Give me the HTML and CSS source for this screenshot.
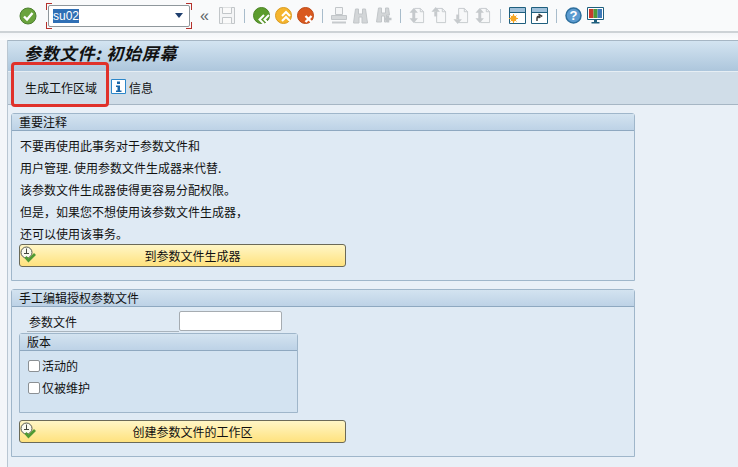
FILE: index.html
```html
<!DOCTYPE html>
<html lang="zh">
<head>
<meta charset="utf-8">
<title>参数文件: 初始屏幕</title>
<link rel="stylesheet" href="styles.css">
</head>
<body>
<svg class="defs" width="0" height="0">
  <symbol id="clock" viewBox="0 0 18 18">
    <circle cx="6.500" cy="7.500" r="5.500" fill="#fafaf0" stroke="#55594f" stroke-width="1"/>
    <path d="M6.500 3.500v5M4 8.500h5" stroke="#45483f" stroke-width="1" fill="none"/>
    <path d="M5.500 12l3 3.500 6.500-6.500" stroke="#4f9a34" stroke-width="2.800" fill="none"/>
  </symbol>
  <symbol id="doc" viewBox="0 0 16 18">
    <path d="M5.500 1.500h6l3.500 3.500v11.500h-9.500z" fill="#f7f8f9" stroke="#c6cacd"/>
    <path d="M11.500 1.500v3.500h3.500" fill="none" stroke="#c6cacd"/>
  </symbol>
</svg>

<header class="toolbar">
  <svg class="ic i-ok" width="18" height="18" viewBox="0 0 18 18">
    <circle cx="9" cy="9" r="8" fill="#6aa33d" stroke="#4d8030"/>
    <path d="M5 9.500l3 3 5.500-6.500" stroke="#fff" stroke-width="2.400" fill="none"/>
  </svg>
  <div class="cmd">
    <i class="crn tl"></i><i class="crn tr"></i><i class="crn bl"></i><i class="crn br"></i>
    <div class="cmd-field"><span class="sel">su02</span><b class="arrow"></b></div>
  </div>
  <span class="chev">«</span>
  <svg class="ic i-save" width="16" height="17" viewBox="0 0 16 17">
    <path d="M.5 .5h15v16h-15z" fill="#f4f5f6" stroke="#c2c6c9"/>
    <path d="M3.500 .5v6h9v-6M3.500 16.500v-6h9v6" fill="#fafafa" stroke="#c2c6c9"/>
  </svg>
  <i class="sep s1"></i>
  <svg class="ic i-nav1" width="18" height="18" viewBox="0 0 18 18">
    <circle cx="8.500" cy="8.500" r="8" fill="#5c9c2e" stroke="#4c8426"/>
    <path d="M11 8l-4.500 4.500 4.500 4.500M16 8l-4.500 4.500 4.500 4.500" stroke="#fff" stroke-width="2" fill="none"/>
  </svg>
  <svg class="ic i-nav2" width="17" height="18" viewBox="0 0 17 18">
    <circle cx="8.500" cy="8.500" r="8" fill="#f5b52e" stroke="#d99a20"/>
    <path d="M7 9l4-4 4 4M7 14l4-4 4 4" stroke="#fff" stroke-width="2" fill="none"/>
  </svg>
  <svg class="ic i-nav3" width="18" height="18" viewBox="0 0 18 18">
    <circle cx="8.500" cy="8.500" r="8" fill="#d9591f" stroke="#bd4a18"/>
    <path d="M8.500 9l6 6M14.500 9l-6 6" stroke="#fff" stroke-width="2.400" fill="none"/>
  </svg>
  <i class="sep s2"></i>
  <svg class="ic i-print" width="16" height="17" viewBox="0 0 16 17">
    <path d="M4.500 .5h7v7h-7z" fill="#f4f5f6" stroke="#c2c6c9"/>
    <path d="M.5 8.500h15v4h-15z" fill="#d6d9db" stroke="#c2c6c9"/>
    <path d="M1 14.500h14v2h-14z" fill="#c6cacd"/>
  </svg>
  <svg class="ic i-bin" width="15" height="16" viewBox="0 0 15 16">
    <path d="M2.500 1h3v5h4v-5h3l2 14h-5.500v-6h-3v6h-5.500z" fill="#d3d6d8" stroke="#c2c6c9"/>
  </svg>
  <svg class="ic i-binp" width="16" height="17" viewBox="0 0 16 17">
    <path d="M2.500 1h3v5h4v-5h3l1 7h-3v7h-2v-6h-3v6h-5z" fill="#d3d6d8" stroke="#c2c6c9"/>
    <path d="M12 8.500v7M8.500 12h7" stroke="#c2c6c9" stroke-width="2.500"/>
  </svg>
  <i class="sep s3"></i>
  <svg class="ic i-d1" width="16" height="17" viewBox="0 0 16 18"><use href="#doc"/><path d="M4.500 1l4.500 5h-9zM4.500 17l4.500-5h-9z" fill="#c6cacd"/><path d="M3 5h3v8h-3z" fill="#c6cacd"/></svg>
  <svg class="ic i-d2" width="16" height="17" viewBox="0 0 16 18"><use href="#doc"/><path d="M4.500 0l4.500 5h-9z" fill="#c6cacd"/><path d="M3 5h3v5h-3z" fill="#c6cacd"/></svg>
  <svg class="ic i-d2" width="16" height="17" viewBox="0 0 16 18"><use href="#doc"/><path d="M4.500 18l4.500-5h-9z" fill="#c6cacd"/><path d="M3 8h3v5h-3z" fill="#c6cacd"/></svg>
  <svg class="ic i-d2" width="16" height="17" viewBox="0 0 16 18"><use href="#doc"/><path d="M4.500 1l4.500 5h-9zM4.500 17l4.500-5h-9z" fill="#c6cacd"/><path d="M3 5h3v8h-3z" fill="#c6cacd"/></svg>
  <i class="sep s4"></i>
  <svg class="ic i-w1" width="17" height="17" viewBox="0 0 17 17">
    <path d="M.5 .5h16v16h-16z" fill="#fff" stroke="#1f5f7e"/>
    <path d="M1 1h15v4h-15z" fill="#9fc0da"/>
    <path d="M1 5.500h15" stroke="#1f5f7e"/>
    <circle cx="4.500" cy="11.500" r="3" fill="#f5a623"/>
    <path d="M4.500 7v9M0 11.500h9M1.500 8.500l6 6M7.500 8.500l-6 6" stroke="#f5a623"/>
  </svg>
  <svg class="ic i-w2" width="17" height="17" viewBox="0 0 17 17">
    <path d="M.5 .5h16v16h-16z" fill="#fff" stroke="#1f5f7e"/>
    <path d="M1 1h15v4h-15z" fill="#9fc0da"/>
    <path d="M1 5.500h15" stroke="#1f5f7e"/>
    <path d="M6 14v-2.500q0-2.500 3-2.500M7.500 7l3 2-3 2" stroke="#3c3c3c" stroke-width="1.500" fill="none"/>
  </svg>
  <i class="sep s5"></i>
  <svg class="ic i-help" width="17" height="17" viewBox="0 0 17 17">
    <circle cx="8.500" cy="8.500" r="7.500" fill="#5b9bd0" stroke="#2e6f9e" stroke-width="1.500"/>
    <text class="q" x="8.500" y="13" text-anchor="middle">?</text>
  </svg>
  <svg class="ic i-mon" width="17" height="17" viewBox="0 0 17 17">
    <path d="M.5 .5h16v12h-16z" fill="#fff" stroke="#1f5f7e"/>
    <path d="M2 2h4.500v9h-4.500z" fill="#c8392b"/>
    <path d="M6.500 2h4v9h-4z" fill="#4d9a3a"/>
    <path d="M10.500 2h4.500v9h-4.500z" fill="#3f79b8"/>
    <path d="M7 13h3v2h-3zM4.500 15h8v1.500h-8z" fill="#1f5f7e"/>
  </svg>
</header>

<div class="strip"></div>

<main class="screen">
  <h1 class="title">参数文件: 初始屏幕</h1>
  <nav class="appbar">
    <span class="app-item first">生成工作区域</span>
    <svg class="info" width="15" height="15" viewBox="0 0 15 15">
      <path d="M.5 .5h14v14h-14z" fill="#fff" stroke="#2b86c9"/>
      <path d="M6 2.500h3v2.500h-3zM5 6.500h4v5h1.500v1.500h-5.500v-1.500h1.500v-3.500h-1.500z" fill="#1a66a8"/>
    </svg>
    <span class="app-item">信息</span>
  </nav>
  <i class="redbox"></i>

  <div class="content">
    <section class="group g1">
      <h2 class="group-head">重要注释</h2>
      <div class="group-body">
        <p class="line">不要再使用此事务对于参数文件和</p>
        <p class="line">用户管理. 使用参数文件生成器来代替.</p>
        <p class="line">该参数文件生成器使得更容易分配权限。</p>
        <p class="line">但是，如果您不想使用该参数文件生成器，</p>
        <p class="line">还可以使用该事务。</p>
        <button class="btn b1" type="button"><svg class="btn-ic" width="18" height="18"><use href="#clock"/></svg><span>到参数文件生成器</span></button>
      </div>
    </section>

    <section class="group g2">
      <h2 class="group-head">手工编辑授权参数文件</h2>
      <div class="group-body">
        <div class="field-row">
          <label class="field-label">参数文件</label>
          <span class="input"></span>
        </div>
        <section class="group inner">
          <h3 class="group-head">版本</h3>
          <div class="inner-body">
            <div class="check"><i class="box"></i><span>活动的</span></div>
            <div class="check"><i class="box"></i><span>仅被维护</span></div>
          </div>
        </section>
        <button class="btn b2" type="button"><svg class="btn-ic" width="18" height="18"><use href="#clock"/></svg><span>创建参数文件的工作区</span></button>
      </div>
    </section>
  </div>
</main>
</body>
</html>
```
FILE: styles.css
```css
* { box-sizing: border-box; }
html, body { margin: 0; padding: 0; }
body {
  width: 738px;
  height: 467px;
  overflow: hidden;
  display: flex;
  flex-direction: column;
  background: #f4f6f9;
  color: #111;
  font: 12px/1 "Noto Sans CJK SC", "Liberation Sans", sans-serif;
}
.defs { position: absolute; }

.toolbar {
  height: 33px;
  flex: none;
  display: flex;
  align-items: center;
  padding: 0 0 0 19px;
  background: #f9fafb;
  border-bottom: 2px solid #cdd2d6;
}
.ic { flex: none; display: block; }
.cmd { position: relative; width: 146px; height: 26px; margin-left: 9px; padding: 2px; flex: none; }
.crn { position: absolute; width: 6px; height: 7px; border: 0 solid #b5312c; }
.tl { left: 0; top: 0; border-width: 1.500px 0 0 1.500px; }
.tr { right: 0; top: 0; border-width: 1.500px 1.500px 0 0; }
.bl { left: 0; bottom: 0; border-width: 0 0 1.500px 1.500px; }
.br { right: 0; bottom: 0; border-width: 0 1.500px 1.500px 0; }
.cmd-field {
  height: 22px;
  display: flex;
  align-items: center;
  justify-content: space-between;
  padding: 0 6px 0 4px;
  background: #fff;
  border: 1px solid #8f979c;
  border-radius: 2px;
}
.sel {
  background: #2f6fb5;
  color: #fff;
  font: 12px/14px "Liberation Sans", sans-serif;
}
.arrow { width: 0; height: 0; border: 4.500px solid transparent; border-top: 5px solid #1f3f6e; border-bottom: 0; }
.chev { margin-left: 8px; width: 11px; font: 16px/16px "Liberation Sans", sans-serif; color: #5d6468; }
.i-save { margin-left: 8px; }
.sep { flex: none; width: 1px; height: 14px; background: #a8bccb; }
.s1 { margin: 0 8px 0 9px; }
.i-nav2 { margin-left: 4px; }
.i-nav3 { margin-left: 5px; }
.s2 { margin: 0 8px 0 7px; }
.i-bin { margin-left: 6px; }
.i-binp { margin-left: 8px; }
.s3 { margin: 0 8px; }
.i-d2 { margin-left: 6px; }
.s4 { margin: 0 8px 0 9px; }
.i-w2 { margin-left: 5px; }
.s5 { margin: 0 8px; }
.i-mon { margin-left: 5px; }
.q { font: bold 13px "Liberation Sans", sans-serif; fill: #fff; }

.strip { height: 7px; flex: none; background: linear-gradient(#f3f5f8, #fbfcfd); }

.screen {
  position: relative;
  flex: 1;
  margin-left: 7px;
  display: flex;
  flex-direction: column;
  background: #e9f0f7;
  border-left: 1px solid #b9c6d2;
}
.title {
  margin: 0;
  height: 32px;
  padding: 1px 0 0 16px;
  flex: none;
  font: italic bold 17px/22px "Noto Sans CJK SC", sans-serif;
  color: #111;
  letter-spacing: .8px;
  background: linear-gradient(#d3e4f1, #adc6dc);
  border-top: 1px solid #a6b6c4;
  border-bottom: 1px solid #e6eef4;
}
.appbar {
  height: 33px;
  flex: none;
  display: flex;
  align-items: center;
  background: #d0dde8;
  border-bottom: 1px solid #a6b6c4;
}
.app-item { color: #111; }
.first { margin-left: 17px; }
.info { margin: -3px 3px 0 14px; }
.redbox {
  position: absolute;
  left: 3px;
  top: 22px;
  width: 98px;
  height: 45px;
  border: 3px solid #e0312a;
  border-radius: 4px;
}

.content { padding: 8px 0 0 3px; }
.group {
  width: 624px;
  border: 1px solid #9fb6ca;
  border-radius: 3px 3px 0 0;
  background: #dfeaf4;
}
.group-head {
  margin: 0;
  height: 17px;
  padding-left: 7px;
  font: 400 12px/16px "Noto Sans CJK SC", sans-serif;
  color: #111;
  background: linear-gradient(#d3e3f0, #bdd2e6);
  border-bottom: 1px solid #8ea8c0;
}
.group-body { padding: 4px 7px 0; }
.g1 { height: 168px; }
.g2 { height: 168px; margin-top: 8px; }
.line { margin: 0 0 0 1px; height: 22px; line-height: 22px; }
.btn {
  width: 327px;
  height: 23px;
  padding: 0 0 0 20px;
  display: flex;
  align-items: center;
  justify-content: center;
  position: relative;
  font: 12px/1 "Noto Sans CJK SC", sans-serif;
  color: #111;
  background: linear-gradient(#fff6c6, #ffe27e);
  border: 1px solid #6b6a58;
  border-radius: 3px;
}
.btn-ic { position: absolute; left: 0; top: 0; }
.b1 { margin-top: -1px; }
.b2 { margin-top: 7px; }
.field-row { display: flex; height: 22px; }
.field-label {
  width: 152px;
  margin: 0 0 1px 8px;
  padding: 3px 0 0 2px;
  border-bottom: 1px solid #a9b4bd;
  line-height: 15px;
}
.input {
  width: 103px;
  height: 20px;
  background: #fff;
  border: 1px solid #a6acb1;
  border-radius: 2px;
}
.inner { width: 279px; height: 80px; background: #d3e3f1; }
.inner-body { padding: 4px 0 0 8px; }
.check { display: flex; align-items: center; height: 22px; }
.box {
  width: 12px;
  height: 12px;
  margin-right: 2px;
  background: #fff;
  border: 1px solid #8b9094;
  border-radius: 2px;
}
```
